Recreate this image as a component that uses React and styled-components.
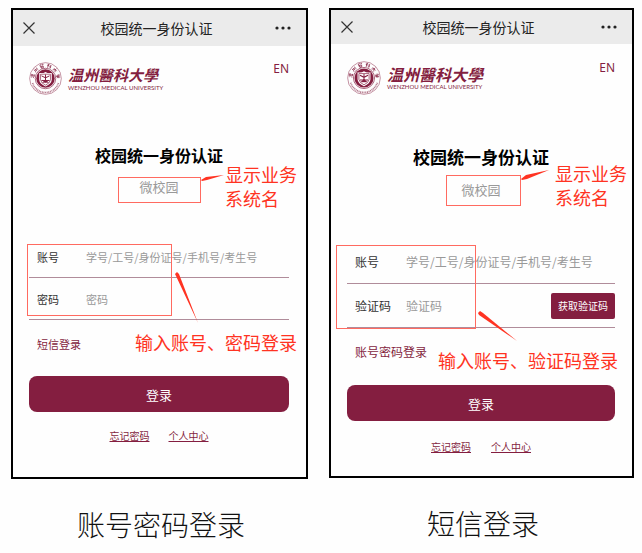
import styled, { createGlobalStyle, ThemeProvider } from 'styled-components';

const colors = {
  wine: '#841e40',
  red: '#ff3322',
  boxRed: '#ff6a60',
  line: '#b08c9a',
  grey: '#999999',
};

const small = {
  header: 36,
  logo: 33,
  logoText: 15,
  logoGap: 16,
  heading: 16,
  headingGap: 48,
  subGap: 10,
  formGap: 39,
  row: 42,
  label: 49,
  text: 11,
  loginGap: 22,
  linksGap: 16,
  linkSpace: 19,
  bottom: 33,
};

const large = {
  header: 34,
  logo: 34,
  logoText: 16,
  logoGap: 17,
  heading: 17,
  headingGap: 50,
  subGap: 11,
  formGap: 40,
  row: 44,
  label: 51,
  text: 12,
  loginGap: 23,
  linksGap: 18,
  linkSpace: 20,
  bottom: 21,
};

const GlobalStyle = createGlobalStyle`
  * {
    box-sizing: border-box;
  }
  body {
    margin: 0;
    background: #fefefe;
    font-family: "Noto Sans CJK SC", sans-serif;
  }
  button, input {
    font-family: inherit;
  }
`;

const Page = styled.main`
  display: grid;
  grid-template-columns: 297fr 305fr;
  gap: 21px;
  align-items: start;
  padding: 8px 8px 0 11px;
`;

const Figure = styled.figure`
  margin: 0;
`;

const Caption = styled.figcaption`
  margin-top: 25px;
  padding-left: 3px;
  font-size: 28px;
  font-weight: 300;
  line-height: 40px;
  text-align: center;
  color: #111;
`;

const Screen = styled.section`
  position: relative;
  border: 2px solid #000;
  background: #fefefe;
`;

const TitleBar = styled.header`
  display: flex;
  align-items: center;
  height: ${({ theme }) => theme.header}px;
  padding: 0 15px 0 7px;
  background: #ebebeb;
`;

const BarTitle = styled.span`
  flex: 1;
  font-size: 14px;
  line-height: 20px;
  text-align: center;
  color: #222;
`;

const IconButton = styled.button`
  display: flex;
  padding: 0;
  border: 0;
  background: none;
`;

const Content = styled.div`
  padding: ${({ theme }) => theme.logoGap}px 17px ${({ theme }) => theme.bottom}px 16px;
`;

const Brand = styled.div`
  display: flex;
  align-items: center;
  height: ${({ theme }) => theme.logo}px;
  color: ${colors.wine};
`;

const BrandNames = styled.div`
  flex: 1;
  margin-left: 6px;
`;

const BrandName = styled.div`
  font-family: "Noto Sans CJK TC", sans-serif;
  font-size: ${({ theme }) => theme.logoText}px;
  font-weight: 700;
  font-style: italic;
  line-height: 18px;
`;

const BrandLatin = styled.div`
  font-family: Lato, sans-serif;
  font-size: 6px;
  font-weight: 400;
  line-height: 8px;
  white-space: nowrap;
`;

const Language = styled.a`
  align-self: flex-start;
  font-family: "Noto Sans", sans-serif;
  font-size: 12px;
  line-height: 14px;
  color: ${colors.wine};
  text-decoration: none;
`;

const Heading = styled.h1`
  margin: ${({ theme }) => theme.headingGap}px 0 0;
  font-size: ${({ theme }) => theme.heading}px;
  font-weight: 700;
  line-height: 24px;
  text-align: center;
  color: #000;
`;

const SystemName = styled.p`
  margin: ${({ theme }) => theme.subGap}px 0 0;
  font-size: 13px;
  line-height: 20px;
  text-align: center;
  color: ${colors.grey};
`;

const Form = styled.form`
  margin-top: ${({ theme }) => theme.formGap}px;
`;

const Field = styled.div`
  display: flex;
  align-items: center;
  height: ${({ theme }) => theme.row}px;
  padding-left: 8px;
  border-bottom: 1px solid ${colors.line};
  font-size: ${({ theme }) => theme.text}px;
`;

const Label = styled.label`
  flex: none;
  width: ${({ theme }) => theme.label}px;
  color: #333;
`;

const Input = styled.input`
  flex: 1;
  min-width: 0;
  padding: 0;
  border: 0;
  outline: 0;
  background: none;
  font-size: inherit;

  &::placeholder {
    color: ${colors.grey};
  }
`;

const CodeButton = styled.button`
  height: 26px;
  padding: 0 7px;
  border: 0;
  border-radius: 2px;
  background: ${colors.wine};
  color: #fff;
  font-size: 10px;
  white-space: nowrap;
`;

const SwitchLink = styled.a`
  display: block;
  margin-top: 14px;
  padding-left: 8px;
  font-size: ${({ theme }) => theme.text}px;
  line-height: 20px;
  color: ${colors.wine};
  text-decoration: none;
`;

const LoginButton = styled.button`
  display: block;
  width: 100%;
  height: 36px;
  margin-top: ${({ theme }) => theme.loginGap}px;
  border: 0;
  border-radius: 8px;
  background: ${colors.wine};
  color: #fff;
  font-size: 13px;
`;

const Links = styled.nav`
  display: flex;
  justify-content: center;
  gap: ${({ theme }) => theme.linkSpace}px;
  margin-top: ${({ theme }) => theme.linksGap}px;
  font-size: 10px;
  line-height: 16px;

  a {
    color: ${colors.wine};
  }
`;

/* Red marks laid over the screen */
const MarkBox = styled.div`
  position: absolute;
  left: ${({ $x }) => $x}px;
  top: ${({ $y }) => $y}px;
  width: ${({ $w }) => $w}px;
  height: ${({ $h }) => $h}px;
  border: 1px solid ${colors.boxRed};
  pointer-events: none;
`;

const MarkText = styled.div`
  position: absolute;
  left: ${({ $x }) => $x}px;
  top: ${({ $y }) => $y}px;
  font-size: 18px;
  line-height: 24px;
  white-space: nowrap;
  color: ${colors.red};
`;

const MarkArrow = styled.svg`
  position: absolute;
  left: 0;
  top: 0;
  width: 100%;
  height: 100%;
  fill: ${colors.red};
  pointer-events: none;
`;

// small brush-like marks set along the upper half of the seal's ring
const sealMarks = [
  { angle: -80, d: 'M-4 -4L-2 -2M-5 4L-2 1M0 -5H5V-1H0ZM-1 4H6M1 1V4M4 1V4' },
  { angle: -48, d: 'M-4 -5V2L-6 5M0 -5V5M5 -5V5M-2 -1L-1 1M2 -1L3 1' },
  { angle: -16, d: 'M-5 -5H0M-5 -5V0H0M2 -5H5L2 -1M-5 2H5M-3 2V6H3V2' },
  { angle: 16, d: 'M-5 -4L0 -5M-6 -1H0M-3 -4V6M2 -4L3 -3M1 2L6 1M5 -5V6' },
  { angle: 48, d: 'M-6 -1H6M0 -6V-1L-5 5M0 -1L5 5' },
  { angle: 80, d: 'M-5 -4H-1M1 -4H5M-6 -1H6M-3 1H3L0 3V6M-4 3H5' },
];

function Seal({ size }) {
  return (
    <svg width={size} height={size} viewBox="0 0 100 100" fill="none" stroke={colors.wine}>
      <circle cx="50" cy="50" r="48" strokeWidth="2" strokeOpacity="0.7" />
      {sealMarks.map(({ angle, d }) => (
        <path key={angle} d={d} strokeWidth="2" transform={`rotate(${angle} 50 50) translate(50 11)`} />
      ))}
      <path d="M11 64A41 41 0 0 0 89 64" strokeWidth="5" strokeDasharray="3 2" strokeOpacity="0.6" />
      <circle cx="50" cy="50" r="31" strokeWidth="2" />
      <circle cx="50" cy="50" r="28" fill={colors.wine} stroke="none" />
      <path d="M31 33Q42 35 50 30Q58 35 69 33V54Q68 67 50 74Q32 67 31 54Z" fill="#fff" stroke="none" />
      <path d="M35 37H65V54Q63 65 50 70Q37 65 35 54Z" strokeWidth="2" />
      <path d="M50 38V62M38 42L50 48L62 42M38 56H62" strokeWidth="3" />
      <path d="M41 62L50 53L59 62Z" fill={colors.wine} strokeWidth="1" />
    </svg>
  );
}

function Phone({ id, theme, fields, switchText, caption, children }) {
  return (
    <ThemeProvider theme={theme}>
      <Figure>
        <Screen>
          <TitleBar>
            <IconButton aria-label="关闭">
              <svg width="18" height="18" viewBox="0 0 18 18" stroke="#333" strokeWidth="1.2">
                <path d="M3.5 3.5L14.5 14.5M14.5 3.5L3.5 14.5" />
              </svg>
            </IconButton>
            <BarTitle>校园统一身份认证</BarTitle>
            <IconButton aria-label="更多">
              <svg width="16" height="6" viewBox="0 0 16 6" fill="#222">
                <circle cx="2" cy="3" r="1.6" />
                <circle cx="8" cy="3" r="1.6" />
                <circle cx="14" cy="3" r="1.6" />
              </svg>
            </IconButton>
          </TitleBar>
          <Content>
            <Brand>
              <Seal size={theme.logo} />
              <BrandNames>
                <BrandName>温州醫科大學</BrandName>
                <BrandLatin>WENZHOU MEDICAL UNIVERSITY</BrandLatin>
              </BrandNames>
              <Language href="#en">EN</Language>
            </Brand>
            <Heading>校园统一身份认证</Heading>
            <SystemName>微校园</SystemName>
            <Form onSubmit={(e) => e.preventDefault()}>
              {fields.map((field) => (
                <Field key={field.name}>
                  <Label htmlFor={`${id}-${field.name}`}>{field.label}</Label>
                  <Input
                    id={`${id}-${field.name}`}
                    type={field.type || 'text'}
                    placeholder={field.placeholder}
                  />
                  {field.action && <CodeButton type="button">{field.action}</CodeButton>}
                </Field>
              ))}
              <SwitchLink href="#switch">{switchText}</SwitchLink>
              <LoginButton type="submit">登录</LoginButton>
            </Form>
            <Links>
              <a href="#forgot">忘记密码</a>
              <a href="#center">个人中心</a>
            </Links>
          </Content>
          {children}
        </Screen>
        <Caption>{caption}</Caption>
      </Figure>
    </ThemeProvider>
  );
}

const account = { name: 'account', label: '账号', placeholder: '学号/工号/身份证号/手机号/考生号' };

const passwordFields = [
  account,
  { name: 'password', label: '密码', placeholder: '密码', type: 'password' },
];

const smsFields = [
  account,
  { name: 'code', label: '验证码', placeholder: '验证码', action: '获取验证码' },
];

export default function App() {
  return (
    <>
      <GlobalStyle />
      <Page>
        <Phone id="pwd" theme={small} fields={passwordFields} switchText="短信登录" caption="账号密码登录">
          <MarkBox $x={105} $y={167} $w={83} $h={26} />
          <MarkBox $x={14} $y={234} $w={145} $h={72} />
          <MarkArrow>
            <path d="M188 170L193 167L211 165L194 170L189 171Z" />
            <path d="M162 264L164 262L166 264L185 313L163 266Z" />
          </MarkArrow>
          <MarkText $x={212} $y={152}>显示业务<br />系统名</MarkText>
          <MarkText $x={122} $y={320}>输入账号、密码登录</MarkText>
        </Phone>
        <Phone id="sms" theme={large} fields={smsFields} switchText="账号密码登录" caption="短信登录">
          <MarkBox $x={115} $y={165} $w={75} $h={31} />
          <MarkBox $x={5} $y={235} $w={140} $h={84} />
          <MarkArrow>
            <path d="M190 169L195 165L218 160L196 169L191 170Z" />
            <path d="M147 303L149 301L152 303L186 331L148 305Z" />
          </MarkArrow>
          <MarkText $x={224} $y={151}>显示业务<br />系统名</MarkText>
          <MarkText $x={107} $y={338}>输入账号、验证码登录</MarkText>
        </Phone>
      </Page>
    </>
  );
}
